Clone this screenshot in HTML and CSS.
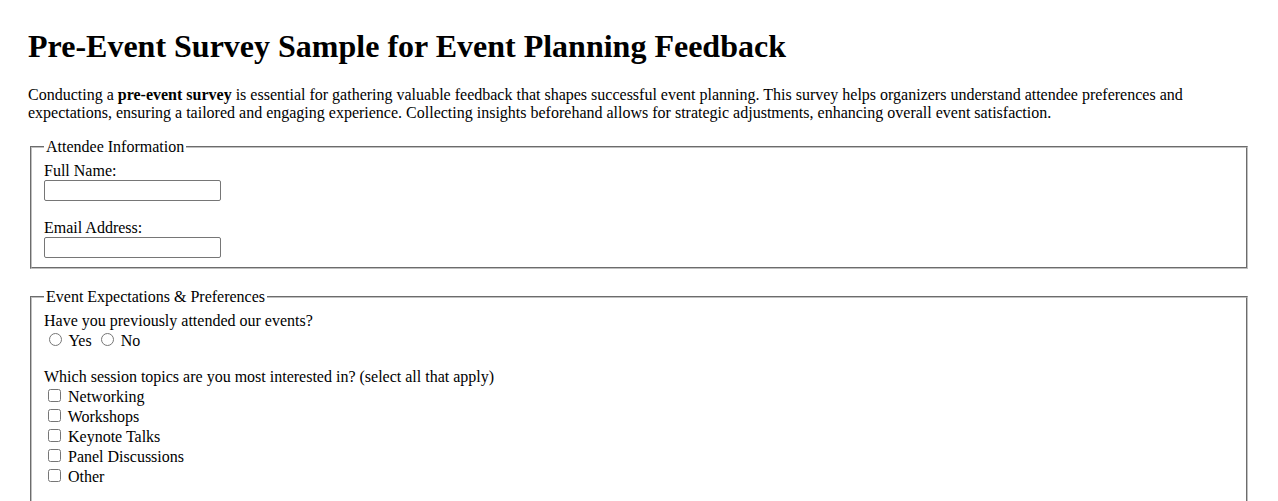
FILE: index.html
```html
<!DOCTYPE html>
<html lang="en">
<head>
<meta charset="utf-8">
<title>Pre-Event Survey Sample</title>
<link rel="stylesheet" href="styles.css">
</head>
<body>
<h1 class="title">Pre-Event Survey Sample for Event Planning Feedback</h1>
<p class="intro">Conducting a <strong>pre-event survey</strong> is essential for gathering valuable feedback that shapes successful event planning. This survey helps organizers understand attendee preferences and expectations, ensuring a tailored and engaging experience. Collecting insights beforehand allows for strategic adjustments, enhancing overall event satisfaction.</p>
<form class="survey">
  <fieldset class="group">
    <legend>Attendee Information</legend>
    <div class="field">
      <label class="field-label" for="name">Full Name:</label>
      <input class="text-input" type="text" id="name">
    </div>
    <div class="field">
      <label class="field-label" for="email">Email Address:</label>
      <input class="text-input" type="email" id="email">
    </div>
  </fieldset>
  <fieldset class="group">
    <legend>Event Expectations &amp; Preferences</legend>
    <div class="field">
      <div class="field-label">Have you previously attended our events?</div>
      <div class="choice-line">
        <label><input type="radio" name="attended"> Yes</label>
        <label><input type="radio" name="attended"> No</label>
      </div>
    </div>
    <div class="field">
      <div class="field-label">Which session topics are you most interested in? (select all that apply)</div>
      <label class="choice"><input type="checkbox"> Networking</label>
      <label class="choice"><input type="checkbox"> Workshops</label>
      <label class="choice"><input type="checkbox"> Keynote Talks</label>
      <label class="choice"><input type="checkbox"> Panel Discussions</label>
      <label class="choice"><input type="checkbox"> Other</label>
    </div>
    <div class="field">
      <label class="field-label" for="goals">What do you hope to gain from attending this event?</label>
      <textarea class="text-area" id="goals" rows="4" cols="50"></textarea>
    </div>
  </fieldset>
</form>
</body>
</html>
```
FILE: styles.css
```css
html, body {
  font-family: "Liberation Serif", "Times New Roman", serif;
  font-size: 16px;
  color: #000;
  background: #fff;
}
body {
  margin: 28px;
}
.title {
  font-size: 32px;
  font-weight: bold;
  line-height: 37px;
  margin: 0 0 21px;
}
.intro {
  margin: 0 0 16px;
  line-height: 18px;
}
.survey {
  margin: 0;
}
.group {
  margin: 0 2px 19px;
  padding: 6px 12px 9px;
  border: 2px groove #c0c0c0;
}
.group legend {
  padding: 0 2px;
  line-height: 18px;
}
.field {
  margin-bottom: 18px;
  line-height: 18px;
}
.field:last-child {
  margin-bottom: 0;
}
.field-label {
  display: block;
}
.text-input {
  display: block;
  box-sizing: border-box;
  width: 177px;
  height: 21px;
  margin: 0;
  padding: 1px 2px;
  border: 1px solid #767676;
  border-radius: 2px;
  font: 13px "Liberation Sans", Arial, sans-serif;
}
.text-area {
  display: block;
  margin: 0;
  border: 1px solid #767676;
  border-radius: 2px;
  font: 13px "Liberation Mono", monospace;
}
.choice-line {
  height: 20px;
  line-height: 20px;
}
.choice {
  display: block;
  height: 20px;
  line-height: 20px;
}
input[type="radio"] {
  margin: 3px 3px 0 5px;
}
input[type="checkbox"] {
  margin: 3px 3px 3px 4px;
}
```
